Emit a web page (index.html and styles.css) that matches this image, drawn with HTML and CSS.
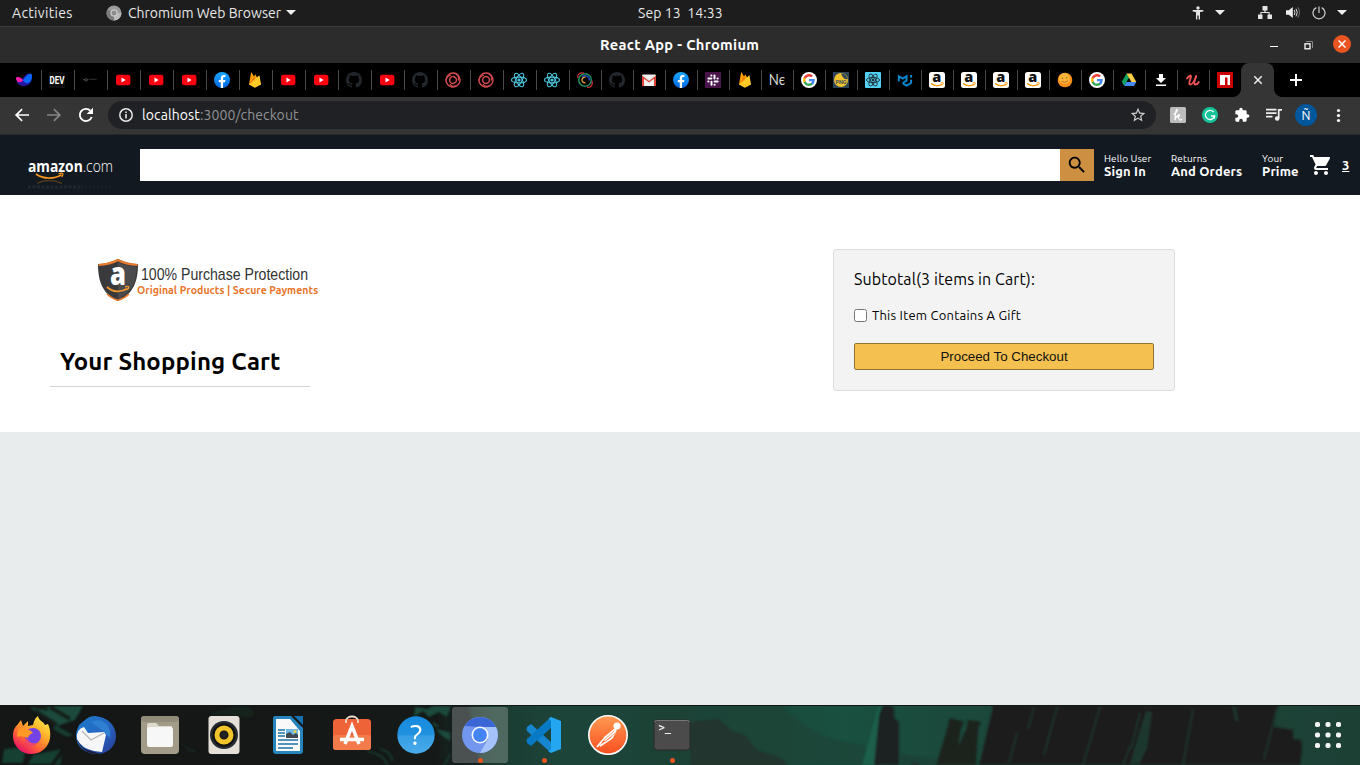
FILE: index.html
```html
<!DOCTYPE html>
<html lang="en">
<head>
<meta charset="utf-8">
<title>React App - Chromium</title>
<link rel="stylesheet" href="styles.css">
</head>
<body>
<svg class="defs" aria-hidden="true">
  <defs>
    <linearGradient id="fbg" x1="0" y1="0" x2="0" y2="1"><stop offset="0" stop-color="#18acfe"/><stop offset="1" stop-color="#0163e0"/></linearGradient>
    <linearGradient id="ffg" x1=".9" y1="0" x2=".2" y2="1"><stop offset="0" stop-color="#fff44f"/><stop offset=".35" stop-color="#ffb52b"/><stop offset=".65" stop-color="#ff6a32"/><stop offset="1" stop-color="#e60073"/></linearGradient>
    <linearGradient id="pmg" x1="0" y1="0" x2="0" y2="1"><stop offset="0" stop-color="#ff9a52"/><stop offset="1" stop-color="#f94f20"/></linearGradient>
    <linearGradient id="helpg" x1="0" y1="0" x2="0" y2="1"><stop offset="0" stop-color="#168be0"/><stop offset=".5" stop-color="#2191df"/><stop offset=".52" stop-color="#359ee5"/><stop offset="1" stop-color="#4aabea"/></linearGradient>
    <linearGradient id="tbg" x1="0" y1="0" x2="1" y2="1"><stop offset="0" stop-color="#1d7ac9"/><stop offset=".5" stop-color="#2568c4"/><stop offset="1" stop-color="#2b3a94"/></linearGradient>
    <symbol id="yt" viewBox="0 0 16 16"><rect x="1" y="2.700" width="14.400" height="10.600" rx="2.400" fill="#ff0010"/><path d="M6.500 5.600v4.800L10.600 8z" fill="#fff"/></symbol>
    <symbol id="gh" viewBox="0 0 16 16"><path fill="#22272d" fill-rule="evenodd" d="M8 0C3.58 0 0 3.58 0 8c0 3.54 2.29 6.53 5.47 7.59.4.07.55-.17.55-.38 0-.19-.01-.82-.01-1.49-2.01.37-2.53-.49-2.69-.94-.09-.23-.48-.94-.82-1.13-.28-.15-.68-.52-.01-.53.63-.01 1.08.58 1.23.82.72 1.21 1.87.87 2.33.66.07-.52.28-.87.51-1.07-1.78-.2-3.64-.89-3.64-3.95 0-.87.31-1.59.82-2.15-.08-.2-.36-1.02.08-2.12 0 0 .67-.21 2.2.82.64-.18 1.32-.27 2-.27s1.36.09 2 .27c1.53-1.04 2.2-.82 2.2-.82.44 1.1.16 1.92.08 2.12.51.56.82 1.27.82 2.15 0 3.07-1.87 3.75-3.65 3.95.29.25.54.73.54 1.48 0 1.07-.01 1.93-.01 2.2 0 .21.15.46.55.38A8.01 8.01 0 0016 8c0-4.42-3.58-8-8-8z"/></symbol>
    <symbol id="fb" viewBox="0 0 16 16"><circle cx="8" cy="8" r="8" fill="url(#fbg)"/><path fill="#fff" d="M6.800 16v-5.700h-2V8h2V6.300c0-2.100 1.200-3.200 3-3.200.9 0 1.600.1 1.600.1v1.900h-1c-1 0-1.300.6-1.300 1.200V8h2.300l-.4 2.300H9.100V16z"/></symbol>
    <symbol id="fire" viewBox="0 0 16 16"><path fill="#ffa000" d="M2 12.500L4 .8c.1-.4.6-.5.8-.1L7 4.600l.9-1.700c.2-.4.6-.4.8 0L14 12.500z"/><path fill="#f57c00" d="M9.500 8.700L7 4.500 2 12.500z"/><path fill="#ffca28" d="M14 12.500L12.600 3.900c-.1-.3-.5-.5-.8-.2L2 12.500l5.300 3.100c.4.200.8.200 1.200 0z"/></symbol>
    <symbol id="knot" viewBox="0 0 16 16"><g fill="none" stroke="#d34b50" stroke-width="1.400"><g id="arm"><path d="M1.200 8.500C.8 4.500 4 .8 8.500 1s6 4.500 4.800 7.500"/><path d="M4.600 8C4.600 5 7.500 3.600 10 5.200"/></g><use href="#arm" transform="rotate(120 8 8)"/><use href="#arm" transform="rotate(240 8 8)"/></g></symbol>
    <symbol id="react" viewBox="0 0 16 16"><circle cx="8" cy="8" r="1.600" fill="currentColor"/><g fill="none" stroke="currentColor" stroke-width="1.100"><ellipse cx="8" cy="8" rx="7.500" ry="2.900"/><ellipse cx="8" cy="8" rx="7.500" ry="2.900" transform="rotate(60 8 8)"/><ellipse cx="8" cy="8" rx="7.500" ry="2.900" transform="rotate(120 8 8)"/></g></symbol>
    <symbol id="gg" viewBox="0 0 16 16"><circle cx="8" cy="8" r="8" fill="#fff"/><g transform="translate(2.100 2.100) scale(.246)"><path fill="#4285f4" d="M47 24.500c0-1.600-.1-3.100-.4-4.500H24v9h12.900c-.6 3-2.300 5.500-4.800 7.200v6h7.700C44.300 38 47 31.800 47 24.500z"/><path fill="#34a853" d="M24 48c6.500 0 11.900-2.100 15.900-5.800l-7.700-6c-2.200 1.400-4.900 2.300-8.200 2.300-6.300 0-11.600-4.200-13.500-9.900h-8v6.200C6.500 42.600 14.600 48 24 48z"/><path fill="#fbbc05" d="M10.500 28.600c-.5-1.400-.8-3-.8-4.600s.3-3.200.8-4.600v-6.200h-8C.9 16.500 0 20.100 0 24s.9 7.500 2.500 10.800z"/><path fill="#ea4335" d="M24 9.500c3.500 0 6.700 1.200 9.200 3.600l6.900-6.900C35.900 2.400 30.500 0 24 0 14.600 0 6.500 5.400 2.500 13.200l8 6.200C12.400 13.700 17.700 9.500 24 9.500z"/></g></symbol>
    <symbol id="amz" viewBox="0 0 16 16"><rect width="16" height="16" rx="2.500" fill="#fff"/><text x="7.800" y="10.200" text-anchor="middle" font-family="Open Sans,sans-serif" font-weight="800" font-size="14.500" fill="#111">a</text><path d="M2 11.200c3.500 3.200 8.200 3.200 11.400.7" fill="none" stroke="#f90" stroke-width="1.300"/><path d="M11.500 10.800c1.300-.4 2.700-.4 2.800 0s-.3 1.800-1 2.500" fill="none" stroke="#f90" stroke-width=".9"/></symbol>
  </defs>
</svg>

<div class="topbar">
  <span class="activities">Activities</span>
  <span class="appmenu">
    <svg width="16" height="16" viewBox="0 0 16 16"><circle cx="8" cy="8" r="7.500" fill="#9b9b9b"/><path d="M8 8L1.500 4.300A7.500 7.500 0 008 15.500z" fill="#7c7c7c"/><path d="M8 8h7.500A7.500 7.500 0 018 15.500z" fill="#b9b9b9"/><circle cx="8" cy="8" r="3.200" fill="#8d8d8d" stroke="#ddd" stroke-width="1"/></svg>
    <span class="appname">Chromium Web Browser</span><i class="caret"></i>
  </span>
  <span class="clock">Sep 13&nbsp; 14:33</span>
  <span class="indicators">
    <svg width="12" height="14" viewBox="0 0 12 14" fill="#e4e4e4"><circle cx="6" cy="2" r="1.700"/><path d="M.7 4h10.600v1.400L8 6v7.500H6.700V9.500H5.300v4H4V6L.7 5.400z"/></svg>
    <i class="caret"></i>
    <svg class="net" width="14" height="13" viewBox="0 0 14 13" fill="#e4e4e4"><path d="M4.500 0h5v4.500H7.600v1.600h4V8.500H14V13H9.500V8.500h1.100v-1.400H3.400v1.400h1.100V13H0V8.500h2.400V6.100h4V4.500H4.500z"/></svg>
    <svg class="vol" width="14" height="13" viewBox="0 0 14 13"><path d="M0 4.300h2.800L6.800 1v11L2.800 8.700H0z" fill="#eee"/><path d="M8.200 4q1.500 2.500 0 5M10 2.700q2.500 3.800 0 7.600" stroke="#ddd" fill="none"/><path d="M11.800 1.300q3.300 5.200 0 10.400" stroke="#777" fill="none"/></svg>
    <svg class="pow" width="14" height="14" viewBox="0 0 14 14" fill="none" stroke="#cfcfcf" stroke-width="1.200"><path d="M7 .5V7M4.300 1.600a6 6 0 105.400 0"/></svg>
    <i class="caret"></i>
  </span>
</div>

<div class="titlebar">
  <span class="title">React App - Chromium</span>
  <span class="controls">
    <i class="min"></i>
    <svg width="9" height="9" viewBox="0 0 9 9" fill="none"><path d="M2 .5h6.500V7" stroke="#888"/><rect x="1" y="2.800" width="5" height="5" stroke="#fff" stroke-width="1.300"/></svg>
    <i class="close"><svg width="8" height="8" viewBox="0 0 8 8"><path d="M.5.5l7 7M7.500.5l-7 7" stroke="#fff" stroke-width="1.500"/></svg></i>
  </span>
</div>

<div class="tabs">
  <div class="tab"><svg viewBox="0 0 16 16"><path d="M0 5.500C1 4 4 5.500 6 7c2-2 4-5.500 8-5.500 2 0 2 2 2 3.500C16 10 13 14 8 14c-4 0-6-1.500-7-4z" fill="#2516a8"/><path d="M7 8.500C9 5 12 1.500 14.500 1.700 16.500 2 16 6 15 8.500S10 13 7 8.500z" fill="#0668f5"/><path d="M0 5.500C2 4 5 5.500 7 8c-1 2.500-5 3-6 1S-.5 6.500 0 5.500z" fill="#ff1fa5"/></svg></div>
  <div class="tab"><svg viewBox="0 0 16 16"><rect width="16" height="16" fill="#0d0d0d"/><text x="8" y="11.800" text-anchor="middle" textLength="15" lengthAdjust="spacingAndGlyphs" font-family="Roboto,sans-serif" font-weight="bold" font-size="10.500" fill="#fff">DEV</text></svg></div>
  <div class="tab"><svg viewBox="0 0 16 16"><g fill="none" stroke="#555" stroke-width="1"><circle cx="4.200" cy="7.800" r="1.200"/><path d="M1 7.800h2M5.500 7.800h1"/><path d="M7.500 7.300h7" stroke="#3c3c3c" stroke-dasharray="2 .5"/></g></svg></div>
  <div class="tab"><svg><use href="#yt"/></svg></div>
  <div class="tab"><svg><use href="#yt"/></svg></div>
  <div class="tab"><svg><use href="#yt"/></svg></div>
  <div class="tab"><svg><use href="#fb"/></svg></div>
  <div class="tab"><svg><use href="#fire"/></svg></div>
  <div class="tab"><svg><use href="#yt"/></svg></div>
  <div class="tab"><svg><use href="#yt"/></svg></div>
  <div class="tab"><svg><use href="#gh"/></svg></div>
  <div class="tab"><svg><use href="#yt"/></svg></div>
  <div class="tab"><svg><use href="#gh"/></svg></div>
  <div class="tab"><svg><use href="#knot"/></svg></div>
  <div class="tab"><svg><use href="#knot"/></svg></div>
  <div class="tab cyan"><svg><use href="#react"/></svg></div>
  <div class="tab cyan"><svg><use href="#react"/></svg></div>
  <div class="tab narrow"><svg viewBox="0 0 16 16" fill="none"><circle cx="8" cy="8" r="6.300" stroke="#17915d" stroke-width="1.500"/><path d="M1 6C0 2 3 0 7 1.200M15 9c1 4-1 7-5 6.200" stroke="#c8323c" stroke-width="1.300"/><path d="M5 4.800C8 2.500 12.500 4 12.500 8.500" stroke="#1e46c8" stroke-width="1.500"/><path d="M8.500 5.200C3.800 4.800 3.800 11 8.500 10.800" stroke="#e2a72c" stroke-width="1.300"/></svg></div>
  <div class="tab narrow"><svg><use href="#gh"/></svg></div>
  <div class="tab narrow"><svg viewBox="0 0 16 16"><rect x="1" y="2.500" width="14" height="11.500" rx="1" fill="#e9e9e9"/><path d="M1 14V3.500L8 9l7-5.500V14h-2.200V7L8 10.800 3.200 7v7z" fill="#dc4437"/><path d="M3.200 14V7L8 10.800 12.800 7v7zM3.200 3L8 6.800 12.800 3z" fill="#f2f2f2"/></svg></div>
  <div class="tab narrow"><svg><use href="#fb"/></svg></div>
  <div class="tab narrow"><svg viewBox="0 0 16 16"><rect width="16" height="16" fill="#4a154b"/><g stroke="#fff" stroke-width="2" stroke-linecap="round"><path d="M3.400 6.400h3M9.500 3.400v3M9.600 9.600h3M6.500 9.700v3"/><path d="M6.300 3.400h.2M12.500 6.400h.2M9.500 12.700h.2M3.300 9.600h.2"/></g></svg></div>
  <div class="tab narrow"><svg><use href="#fire"/></svg></div>
  <div class="tab narrow"><svg viewBox="0 0 16 16"><text x="-.3" y="13.300" font-family="Lato,sans-serif" font-size="14.500" textLength="16.500" lengthAdjust="spacingAndGlyphs" fill="#d8d8d8">Nє</text></svg></div>
  <div class="tab narrow"><svg><use href="#gg"/></svg></div>
  <div class="tab narrow"><svg viewBox="0 0 16 16"><rect width="16" height="16" fill="#2d4557"/><circle cx="8" cy="8" r="7" fill="#f0c02e"/><path d="M8 1.500c3 0 6 2 6.500 5.500-3 1-5-2-6.500-5.500z" fill="#2d4557"/><text x="8" y="12" text-anchor="middle" font-family="Roboto,sans-serif" font-weight="bold" font-size="5.500" fill="#44515a">PNG</text></svg></div>
  <div class="tab narrow boxed"><svg><use href="#react"/></svg></div>
  <div class="tab narrow"><svg viewBox="0 0 16 16" fill="none" stroke="#0885cf" stroke-width="2"><path d="M1.800 9.500V4.200l4 2.300 3.700-2.300v4.500l-3 1.800v1.300l3.200 1.800 4.400-2.600V7.800"/><path d="M14.100 3v2.500"/></svg></div>
  <div class="tab narrow"><svg><use href="#amz"/></svg></div>
  <div class="tab narrow"><svg><use href="#amz"/></svg></div>
  <div class="tab narrow"><svg><use href="#amz"/></svg></div>
  <div class="tab narrow"><svg><use href="#amz"/></svg></div>
  <div class="tab narrow"><svg viewBox="0 0 16 16"><circle cx="8" cy="8" r="7.300" fill="#f98f16"/><circle cx="7.500" cy="6.500" r="5.500" fill="#fdb53a"/><path d="M4.500 9.500q3.500 2 6.500-.8" stroke="#a85a18" stroke-width=".8" fill="none"/><circle cx="5.500" cy="6.300" r=".7" fill="#a85a18"/><circle cx="9.800" cy="5.800" r=".7" fill="#a85a18"/></svg></div>
  <div class="tab narrow"><svg><use href="#gg"/></svg></div>
  <div class="tab narrow"><svg viewBox="0 0 16 16"><path d="M5.500 1.500L.8 9.700l2.300 4.300 5-8.400z" fill="#11a260"/><path d="M5.500 1.500h5L15.300 10h-4.900z" fill="#ffcf48"/><path d="M3.100 14l2.400-4h9.800L13 14z" fill="#4688f4"/></svg></div>
  <div class="tab narrow"><svg viewBox="0 0 16 16" fill="#fff"><path d="M6 2h4v4h3L8 11 3 6h3zM3 12.500h10V14H3z"/></svg></div>
  <div class="tab narrow"><svg viewBox="0 0 16 16" fill="none" stroke="#ec5252" stroke-linecap="round"><path d="M2 6.500C4 4 6 2.500 6 4.500S2.800 12 5 12.500s5-5 6.300-8.500" stroke-width="1.900"/><path d="M11 4.500C10 8 8 12 10.300 12.500c1.700 0 3-1.500 3.500-2.500" stroke-width="1.900"/></svg></div>
  <div class="tab last"><svg viewBox="0 0 16 16"><rect width="16" height="16" fill="#cb0000"/><path d="M3 3h10v10h-2.500V5.500H8V13H3z" fill="#fff"/></svg></div>
  <div class="tab active"><svg viewBox="0 0 16 16"><path d="M4.300 4.300l7.400 7.400M11.700 4.300l-7.400 7.400" stroke="#eee" stroke-width="1.500"/></svg></div>
  <svg class="plus" width="12" height="12" viewBox="0 0 12 12"><path d="M6 0v12M0 6h12" stroke="#fff" stroke-width="2"/></svg>
</div>

<div class="toolbar">
  <svg class="ic back" viewBox="0 0 24 24" fill="#fff"><path d="M22.500 10.700H6.300l6.700-6.700L11.300 2.100 1.400 12l9.900 9.900 1.700-1.900L6.300 13.300h16.200z"/></svg>
  <svg class="ic fwd" viewBox="0 0 24 24" fill="#858585"><path d="M1.500 10.700h16.200L11 4l1.700-1.900 9.900 9.900-9.900 9.900L11 20l6.700-6.700H1.500z"/></svg>
  <svg class="ic reload" viewBox="0 0 16 16"><path d="M13.700 10A6.100 6.100 0 1112.500 3.900" fill="none" stroke="#fff" stroke-width="1.900"/><path d="M15 .8v6.300H8.700z" fill="#fff"/></svg>
  <div class="omnibox">
    <svg class="info" viewBox="0 0 16 16"><circle cx="8" cy="8" r="6.200" fill="none" stroke="#e8e8e8" stroke-width="1.500"/><path d="M7.200 7h1.600v4.600H7.200zM7.200 4.400h1.600V6H7.200z" fill="#e8e8e8"/></svg>
    <span class="url"><b>localhost</b>:3000/checkout</span>
    <svg class="star" viewBox="1 1 22 22" fill="#d0d0d0"><path d="M22 9.240l-7.190-.62L12 2 9.190 8.630 2 9.240l5.460 4.730L5.820 21 12 17.270 18.180 21l-1.630-7.030L22 9.240zM12 15.400l-3.760 2.270 1-4.280-3.320-2.880 4.380-.38L12 6.100l1.710 4.040 4.380.38-3.320 2.880 1 4.280L12 15.400z"/></svg>
  </div>
  <div class="exts">
    <svg viewBox="0 0 16 16" width="16" height="16"><rect width="16" height="16" rx="1.500" fill="#bdbdbd"/><path d="M3.500 7.500C6 6 8 3.500 7.200 2.600S5 6 5 13c1-4 4-6 4.600-5S8 10 7.500 9.700c1.500 0 1.500 3.800 2.700 3.500s1.500-.8 1.800-1.300" stroke="#fff" stroke-width="1.200" fill="none"/></svg>
    <svg viewBox="0 0 16 16" width="16" height="16"><circle cx="8" cy="8" r="8" fill="#15c39a"/><path d="M11.600 5A4.600 4.600 0 1012.500 9H9" stroke="#fff" stroke-width="1.300" fill="none"/><path d="M12.500 8.500v3" stroke="#fff" stroke-width="1.200"/></svg>
    <svg viewBox="0 0 24 24" width="16" height="16" fill="#fff"><path d="M20.500 11H19V7c0-1.100-.9-2-2-2h-4V3.500C13 2.120 11.880 1 10.500 1S8 2.120 8 3.500V5H4c-1.100 0-1.990.9-1.990 2v3.800H3.500c1.490 0 2.700 1.210 2.700 2.700s-1.210 2.700-2.700 2.700H2V20c0 1.100.9 2 2 2h3.800v-1.500c0-1.490 1.210-2.700 2.700-2.700 1.490 0 2.700 1.210 2.700 2.700V22H17c1.100 0 2-.9 2-2v-4h1.500c1.380 0 2.500-1.120 2.500-2.500S21.880 11 20.500 11z"/></svg>
    <svg viewBox="0 0 16 16" width="16" height="16"><path d="M0 2.700h10.500M0 6.200h10.500M0 9.700h6.500" stroke="#eee" stroke-width="1.700"/><path d="M12.700 11V2.800H16" stroke="#eee" stroke-width="1.700" fill="none"/><circle cx="11.200" cy="11.500" r="2.300" fill="#eee"/></svg>
    <span class="avatar">Ñ</span>
    <svg viewBox="0 0 16 16" width="16" height="16" fill="#fff"><circle cx="8.500" cy="3.500" r="1.600"/><circle cx="8.500" cy="8.500" r="1.600"/><circle cx="8.500" cy="13.500" r="1.600"/></svg>
  </div>
</div>

<header class="shop-header">
  <svg class="logo" width="100" height="40" viewBox="0 -8 100 40">
    <text x="8" y="14" textLength="85" lengthAdjust="spacingAndGlyphs" font-family="Open Sans,sans-serif" font-weight="bold" font-size="16" fill="#fff">amazon<tspan font-weight="300">.com</tspan></text>
    <path d="M16 16c7 5.300 18 5.300 25.500.8" fill="none" stroke="#f7981d" stroke-width="1.600"/><path d="M38.500 15.800c2-.6 3.700-.8 4.300-.3s-.3 2.500-1.300 3.500" fill="none" stroke="#f7981d" stroke-width="1.200"/>
    <path d="M17 25.500c7-4 17-4 25 0" fill="none" stroke="#4a3820" stroke-width="1.400"/>
    <path d="M8 29h55" stroke="#20262c" stroke-width="3.500" stroke-dasharray="3 1.500"/><path d="M65 29h28" stroke="#1a2027" stroke-width="3" stroke-dasharray="2 2"/>
  </svg>
  <input class="search" type="text" aria-label="Search">
  <button class="search-btn" aria-label="Search"><svg width="22" height="22" viewBox="0 0 24 24"><path d="M15.500 14h-.79l-.28-.27C15.410 12.590 16 11.110 16 9.500 16 5.910 13.090 3 9.500 3S3 5.910 3 9.500 5.910 16 9.500 16c1.610 0 3.090-.59 4.230-1.570l.27.28v.79l5 4.990L20.490 19l-4.990-5zm-6 0C7.010 14 5 11.990 5 9.500S7.010 5 9.500 5 14 7.010 14 9.500 11.990 14 9.500 14z"/></svg></button>
  <nav class="nav">
    <a class="opt signin"><span>Hello User</span><strong>Sign In</strong></a>
    <a class="opt orders"><span>Returns</span><strong>And Orders</strong></a>
    <a class="opt prime"><span>Your</span><strong>Prime</strong></a>
    <a class="cart"><svg width="24" height="24" viewBox="0 0 24 24" fill="#fff"><path d="M7 18c-1.100 0-1.990.9-1.990 2S5.900 22 7 22s2-.9 2-2-.9-2-2-2zM1 2v2h2l3.600 7.590-1.350 2.450c-.16.280-.25.610-.25.960 0 1.100.9 2 2 2h12v-2H7.420c-.14 0-.25-.11-.25-.25l.03-.12.9-1.630h7.450c.75 0 1.410-.41 1.750-1.030l3.580-6.490c.08-.14.120-.31.120-.48 0-.55-.45-1-1-1H5.210l-.94-2H1zm16 16c-1.100 0-1.990.9-1.990 2s.89 2 1.990 2 2-.9 2-2-.9-2-2-2z"/></svg><span>3</span></a>
  </nav>
</header>

<main class="checkout">
  <section class="left">
    <svg class="promo" width="270" height="60" viewBox="0 1 270 60">
      <path d="M48 16c7 0 14-2 20-5 6 3 13 5 20 5 0 18-5 30-20 37-15-7-20-19-20-37z" fill="#3a3a3d"/>
      <path d="M68 14c5 2.800 12 4.500 18.500 5 0 14-4 25-18.500 32z" fill="#4b4b4e"/>
      <path d="M48.500 17c7-.5 14-2 19.500-5 5.500 3 12.500 4.500 19.500 5" fill="none" stroke="#e9792d" stroke-width="2"/>
      <path d="M57 46q4 4 11 6.300 7-2.300 11-6.300" fill="none" stroke="#e9792d" stroke-width="1.600"/>
      <text x="68" y="37" text-anchor="middle" font-family="Open Sans,sans-serif" font-weight="800" font-size="31" textLength="16" lengthAdjust="spacingAndGlyphs" fill="#fff">a</text>
      <path d="M57 39c6 5.500 14 5.500 20.500 1.500" fill="none" stroke="#f39a2d" stroke-width="1.800"/><path d="M75 38.800c2-.6 3.500-.5 3.700 0s-.4 2-1.400 3" fill="none" stroke="#f39a2d" stroke-width="1.300"/>
      <text x="91" y="31.500" textLength="167" lengthAdjust="spacingAndGlyphs" font-family="Liberation Sans,sans-serif" font-size="17" fill="#333">100% Purchase Protection</text>
    </svg>
    <div class="promo-sub">Original Products | Secure Payments</div>
    <h2>Your Shopping Cart</h2>
  </section>
  <aside class="subtotal">
    <p>Subtotal(3 items in Cart):</p>
    <label class="gift"><input type="checkbox">This Item Contains A Gift</label>
    <button>Proceed To Checkout</button>
  </aside>
</main>

<div class="page-bg"></div>

<div class="dock">
  <svg class="wall" width="1360" height="60" viewBox="0 0 1360 60" preserveAspectRatio="none">
    <defs>
      <linearGradient id="sky" x1="0" y1="0" x2="1" y2="0"><stop offset="0" stop-color="#151616"/><stop offset=".32" stop-color="#151918"/><stop offset=".36" stop-color="#1a3a30"/><stop offset=".41" stop-color="#1d4439"/><stop offset=".5" stop-color="#1b4438"/><stop offset=".62" stop-color="#195040"/><stop offset=".7" stop-color="#1b493b"/><stop offset="1" stop-color="#1d4035"/></linearGradient>
      <filter id="soft"><feGaussianBlur stdDeviation=".9"/></filter>
    </defs>
    <rect width="1360" height="60" fill="url(#sky)"/>
    <g filter="url(#soft)">
      <path d="M28 1h55l-8 14-18 6-12-7z" fill="#1a4b3d"/><path d="M35 6l22 14M50 2l20 12M28 0l20 4" stroke="#161a19" stroke-width="4"/>
      <path d="M55 20l18 10-6 2-14-8zM4 44l22-2-3 16H2zM33 50l28-6-10 15H28zM62 50l-8 10h6z" fill="#173f33"/>
      <path d="M180 38l18 8-8 2zM208 10q50-20 45 3l-30-3z" fill="#17211d"/>
      <path d="M415 2l12 2 6-3 18 0-4 11-8-5-10 5-6-6-9 6zM436 24l12 3 12 4-8 6-10-6zM432 16l8 6-6-1z" fill="#1b4c3d"/><path d="M367 46q18 4 20 14M380 44q12 3 12 12M452 46l-8 14" fill="none" stroke="#1a4236" stroke-width="1.500"/>
      <path d="M450 0h18l12 60h-30z" fill="#181b1a"/>
      <path d="M640 0h140q30 30 60 36l26 5v19H640z" fill="#1f4036" opacity=".65"/>
      <path d="M690 17l28-3 16 13 11 3 12 15 22 7 10 9h-99z" fill="#21342e"/>
      <path d="M862 60l16-58h6v58z" fill="#1a5e4b"/><path d="M874 60l5-50 3-8q6-4 12 1v9l5 6v42z" fill="#1f2422"/>
      <path d="M900 48q20 5 45 6v6h-45z" fill="#1e4237"/><path d="M910 60q6-4 10 0z" fill="#1b2522"/>
      <path d="M936 60l8-25 5-18 1-4 14 4-3 5-3 20 9-19 1-8 13 2-3 6-2 37z" fill="#1d211f"/>
      <path d="M979 60L993 0h285l-4 22 19 3v9l8 1 1 9-2 16z" fill="#1c1c1a"/>
      <path d="M992 4l-12 50M1017 28l-8 30M1034 2l-6 22M1057 2l-13 48M1100 2l-17 58M1140 8l-9 36M1130 42l-7 18M1193 4l-10 56M1277 4l-13 50" fill="none" stroke="#1d4539" stroke-width="1"/>
      <path d="M1146 6l6 1-5 36-8 16h-9l6-20z" fill="#1c372e"/><path d="M1234 2l3 14" stroke="#1c372e" stroke-width="3"/>
    </g>
    <path d="M0 .5h1360" stroke="#121615"/>
  </svg>
  <div class="dock-items">
    <div class="app"><svg viewBox="0 0 40 40"><path d="M6 9l3-4 2 6 5-5v5l5-1c1-5 3-8 5-9 1 5 5 5 7 9l3-1c3 6 3 15 0 20-3 6-9 10-17 10C9 39 1 31 1 21 1 15 3 12 6 9z" fill="url(#ffg)"/><circle cx="21" cy="21" r="8" fill="#7542e5"/><path d="M8 13q8 1 11 3l2 2q-4 1-5 5-6-3-11-1 0-6 3-9z" fill="#ff9825"/><path d="M15 23q2 7 11 5-7 7-14 0z" fill="#f04565"/></svg></div>
    <div class="app"><svg viewBox="0 0 40 40"><path d="M3 10C8 6 12 1 19 1c12 1 21 9 21 20S31 39 21 39 0 33 0 20c0-4 2-7 3-10z" fill="url(#tbg)"/><path d="M15 7q10-5 17 4 3 5 2 12l-6-6z" fill="#2f80d2"/><path d="M1 24Q0 14 8 12l4 6 16-1 2 3-4 17-8-1q-13-3-17-12z" fill="#f6f6f6"/><path d="M6 16l9 9 13-7" fill="none" stroke="#b5b5b5" stroke-width="1.200"/><path d="M1 24q4 9 11 11l13 4q-19 1-24-15z" fill="#1c1c3a"/></svg></div>
    <div class="app"><svg viewBox="0 0 40 40"><rect x="1" y="1" width="38" height="38" rx="4" fill="#a29b88"/><rect x="1" y="1" width="38" height="6" rx="3" fill="#918b79"/><path d="M7 10q0-2 2-2h7l3 3H32v5H7z" fill="#dedace"/><rect x="7" y="12" width="26" height="20" rx="2.500" fill="#f7f7f7"/></svg></div>
    <div class="app"><svg viewBox="0 0 40 40"><rect x="4.500" y="1" width="31" height="38" rx="3" fill="#e6e0d8"/><circle cx="20" cy="20" r="14" fill="#252b30"/><circle cx="20" cy="20" r="11.500" fill="#111"/><circle cx="20" cy="20" r="7" fill="none" stroke="#f1c42b" stroke-width="5"/><circle cx="20" cy="20" r="3.400" fill="#222"/></svg></div>
    <div class="app"><svg viewBox="0 0 40 40"><path d="M7 1h16l12 12v23q0 3-3 3H8q-3 0-3-3V4q0-3 2-3z" fill="#2785bd"/><path d="M26 1h9v9z" fill="#1770ae"/><path d="M8 4h14l10 12v20H8z" fill="#f9f9f9"/><path d="M10 15h7M10 18h7M10 21h7M10 25h20M10 29h20M10 33h15" stroke="#2171a6" stroke-width="1.600"/><rect x="18" y="14" width="12" height="9" fill="#6eb9e5"/><path d="M18 23v-4l4-2 3 3 3-2 2 2v3z" fill="#3e4951"/><circle cx="27" cy="16.500" r="1.500" fill="#f4cf41"/></svg></div>
    <div class="app"><svg viewBox="0 0 40 40"><rect x="1" y="4" width="38" height="31" rx="3.500" fill="#ee6338"/><rect x="1" y="20" width="38" height="15" rx="3" fill="#f37a4a"/><path d="M14 8V6c0-6 12-6 12 0v2" fill="none" stroke="#eedbcf" stroke-width="1.800"/><path d="M13 29l7-18 7 18M8 24.500h24" fill="none" stroke="#fff" stroke-width="3.500"/></svg></div>
    <div class="app"><svg viewBox="0 0 40 40"><circle cx="20" cy="20" r="18.700" fill="url(#helpg)"/><text x="20" y="30" text-anchor="middle" font-family="Open Sans,sans-serif" font-size="28" fill="#fff">?</text></svg></div>
    <div class="app current running"><svg viewBox="0 0 40 40"><circle cx="20" cy="20" r="18" fill="#7397ee"/><path d="M4.500 11A18 18 0 0136 12H20z" fill="#3b67d6"/><path d="M36 12a18 18 0 01-16 26l8-14-4-12z" fill="#a5c2fa"/><circle cx="20" cy="20" r="8.500" fill="#f5f8ff"/><circle cx="20" cy="20" r="6.900" fill="#4584f4"/></svg></div>
    <div class="app running"><svg viewBox="0 0 40 40"><path d="M3 12l4-3 20 18v11L3 16q-1-2 0-4z" fill="#1686d0"/><path d="M3 28l4 3 20-18V2L3 24q-1 2 0 4z" fill="#0879c4"/><path d="M27 2l10 4v28l-10 4-3-2q3 0 3-3V7q0-3-3-3z" fill="#25a6f1"/></svg></div>
    <div class="app"><svg viewBox="0 0 40 40"><circle cx="20" cy="20" r="19.200" fill="url(#pmg)" stroke="#fff" stroke-width="1.600"/><circle cx="29" cy="11" r="3.500" fill="#fff"/><path d="M29 13L15 25l-6 7M28 15l-4 8-12 8" fill="none" stroke="#fff" stroke-width="1.800"/><path d="M26 14L16 22l-1 3 2 1 7-5 3-5z" fill="#fff"/><path d="M26 16L14 27M27 18L17 27" stroke="#f98145" stroke-width=".7"/></svg></div>
    <div class="app running"><svg viewBox="0 0 40 40"><rect x="2" y="5" width="36" height="30" rx="2.500" fill="#4b4b4b" stroke="#282828"/><path d="M2.500 7q0-1.500 2-1.500h31q2 0 2 1.500" stroke="#777" fill="none"/><text x="6.500" y="16" font-family="DejaVu Sans Mono,monospace" font-weight="bold" font-size="10.500" fill="#eee">&gt;_</text></svg></div>
    <svg class="grid" width="26" height="26" viewBox="0 0 26 26" fill="#f3f3f3"><rect x="0" width="5" height="5" rx="1.800"/><rect x="10.500" width="5" height="5" rx="1.800"/><rect x="21" width="5" height="5" rx="1.800"/><rect y="10.500" width="5" height="5" rx="1.800"/><rect x="10.500" y="10.500" width="5" height="5" rx="1.800"/><rect x="21" y="10.500" width="5" height="5" rx="1.800"/><rect y="21" width="5" height="5" rx="1.800"/><rect x="10.500" y="21" width="5" height="5" rx="1.800"/><rect x="21" y="21" width="5" height="5" rx="1.800"/></svg>
  </div>
</div>
</body>
</html>
```
FILE: styles.css
```css
* { box-sizing: border-box; }
html, body { margin: 0; height: 765px; overflow: hidden; }
body { font-family: Ubuntu, "Noto Sans", sans-serif; color: #000; background: #fff; display: flex; flex-direction: column; width: 1360px; }
svg { display: block; flex: none; }
.defs { position: absolute; width: 0; height: 0; }

.topbar { height: 27px; flex: none; background: #1d1d1d; border-bottom: 1px solid #3b3b3b; color: #e8e8e8; font-size: 14px; display: grid; grid-template-columns: 95px 543px 1fr 168px; align-items: center; padding-left: 12px; line-height: 24px; padding-bottom: 1px; }
.activities { letter-spacing: .32px; }
.appmenu { display: flex; align-items: center; margin-left: -1px; }
.appname { margin: 0 4px 0 6px; width: 154px; white-space: nowrap; }
.caret { width: 0; height: 0; border: 5px solid transparent; border-top: 5px solid #eee; border-bottom: 0; flex: none; }
.clock { margin-left: -12px; letter-spacing: .08px; }
.indicators { display: flex; align-items: center; }
.indicators .caret { margin-left: 11px; }
.indicators .net { margin-left: 33px; }
.indicators .vol { margin-left: 14px; }
.indicators .pow { margin-left: 12px; }

.titlebar { height: 36px; flex: none; background: #2c2c2c; color: #fff; display: grid; grid-template-columns: 600px 1fr 91px; align-items: center; }
.title { grid-column: 2; font-weight: bold; font-size: 14.667px; letter-spacing: .32px; padding-bottom: 2px; }
.controls { display: flex; align-items: center; }
.min { width: 8px; height: 1px; background: #fff; margin: 3px 26px 0 1px; }
.close { width: 18px; height: 18px; border-radius: 50%; background: #e95420; display: grid; place-items: center; margin-left: 20px; margin-top: -2px; }

.tabs { height: 34px; flex: none; background: #000; display: flex; align-items: center; padding-left: 9px; }
.tab { width: 33px; height: 20px; padding: 2px 0 2px 7px; border-right: 1px solid #4a4a4a; flex: none; }
.tab svg { width: 16px; height: 16px; }
.tab.narrow { width: 32px; }
.tab.last { width: 31px; border: 0; }
.cyan { color: #4cc6de; }
.boxed svg { background: #53d3f3; color: #20303a; border-radius: 1px; padding: 1px; }
.tab.active { height: 34px; width: 33px; border: 0; border-radius: 8px 8px 0 0; background: #353535; padding: 9px 0 0 9px; position: relative; }
.tab.active::before, .tab.active::after { content: ""; position: absolute; bottom: 0; width: 8px; height: 8px; }
.tab.active::before { left: -8px; background: radial-gradient(circle at 0 0, #000 7.500px, #353535 8.200px); }
.tab.active::after { right: -8px; background: radial-gradient(circle at 100% 0, #000 7.500px, #353535 8.200px); }
.plus { margin-left: 16px; }

.toolbar { height: 38px; flex: none; background: #353535; border-bottom: 1px solid #292929; display: flex; align-items: center; padding-left: 14px; }
.ic { width: 16px; height: 16px; margin: -2px 16px 0 0; }
.ic.reload { margin-right: 14px; }
.omnibox { width: 1048px; height: 28px; border-radius: 14px; background: #202124; display: flex; align-items: center; padding: 0 10px; margin-top: -1px; }
.omnibox svg { width: 16px; height: 16px; }
.url { flex: 1; margin: -1px 0 0 8px; font-size: 14px; letter-spacing: .1px; color: #8f9296; }
.url b { color: #fff; font-weight: normal; }
.exts { display: grid; grid-template-columns: repeat(6, 32px); place-items: center; margin: -1px 0 0 6px; }
.avatar { width: 22px; height: 22px; border-radius: 50%; background: #01579b; color: #fff; font-size: 12.500px; line-height: 22px; text-align: center; }

.shop-header { height: 60px; flex: none; background: #131921; display: flex; align-items: center; padding-left: 20px; }
.logo { margin: 15px 20px 0 0; height: 40px; align-self: flex-start; }
.search { width: 920px; height: 32px; border: 0; padding: 10px; background: #fff; }
.search-btn { width: 34px; height: 32px; border: 0; padding: 0; background: #cd9042; display: grid; place-items: center; }
.nav { display: flex; color: #fff; align-items: center; }
.opt { display: flex; flex-direction: column; padding-top: 1px; }
.opt span { font-size: 10px; line-height: 12px; letter-spacing: .1px; }
.opt strong { font-size: 13px; line-height: 14px; letter-spacing: .15px; white-space: nowrap; margin: -1px 0 1px; }
.signin { margin-left: 10px; width: 67px; }
.orders { width: 91px; }
.prime { width: 47px; }
.cart { display: flex; align-items: center; }
.cart span { font-size: 13px; font-weight: bold; text-decoration: underline; margin-left: 9px; }

.checkout { height: 237px; flex: none; display: flex; background: #fff; padding: 54px 185px 0 50px; justify-content: space-between; align-items: flex-start; }
.left { width: 270px; }
.promo-sub { margin: -25px 0 0 87px; font-size: 10.500px; font-weight: bold; line-height: 12px; letter-spacing: .06px; color: #e87427; white-space: nowrap; }
h2 { margin: 42px 10px 0 0; padding: 10px; height: 49px; width: 260px; border-bottom: 1px solid #d3d3d3; font-size: 24px; line-height: 28px; white-space: nowrap; letter-spacing: .16px; }
.subtotal { width: 342px; height: 142px; padding: 20px; background: #f3f3f3; border: 1px solid #ddd; border-radius: 3px; }
.subtotal p { margin: 0; font-size: 16px; line-height: 19px; letter-spacing: .1px; }
.gift { display: flex; align-items: center; margin-top: 17px; font-size: 13px; line-height: 16px; letter-spacing: .23px; height: 18px; }
.gift input { width: 13px; height: 13px; margin: 0 5px 0 0; }
.subtotal button { display: block; margin-top: 19px; width: 300px; height: 27px; padding: 0; border: 1px solid #8f7432; border-radius: 2px; background: #f4c150; color: #111; font: 13.333px "Liberation Sans", Arial, sans-serif; }

.page-bg { height: 273px; flex: none; background: #e9eced; }

.dock { height: 60px; flex: none; display: grid; overflow: hidden; }
.wall, .dock-items { grid-area: 1 / 1; }
.dock-items { display: flex; align-items: center; z-index: 1; position: relative; }
.app { width: 56px; height: 56px; margin: 0 4px; padding: 8px; border-radius: 3px; position: relative; flex: none; }
.app svg { width: 40px; height: 40px; }
.current { background: rgba(255, 255, 255, .23); }
.running::after { content: ""; position: absolute; left: 25.500px; bottom: 0; width: 5px; height: 5px; border-radius: 50%; background: #e95420; }
.grid { margin-left: auto; margin-right: 19px; }
```
